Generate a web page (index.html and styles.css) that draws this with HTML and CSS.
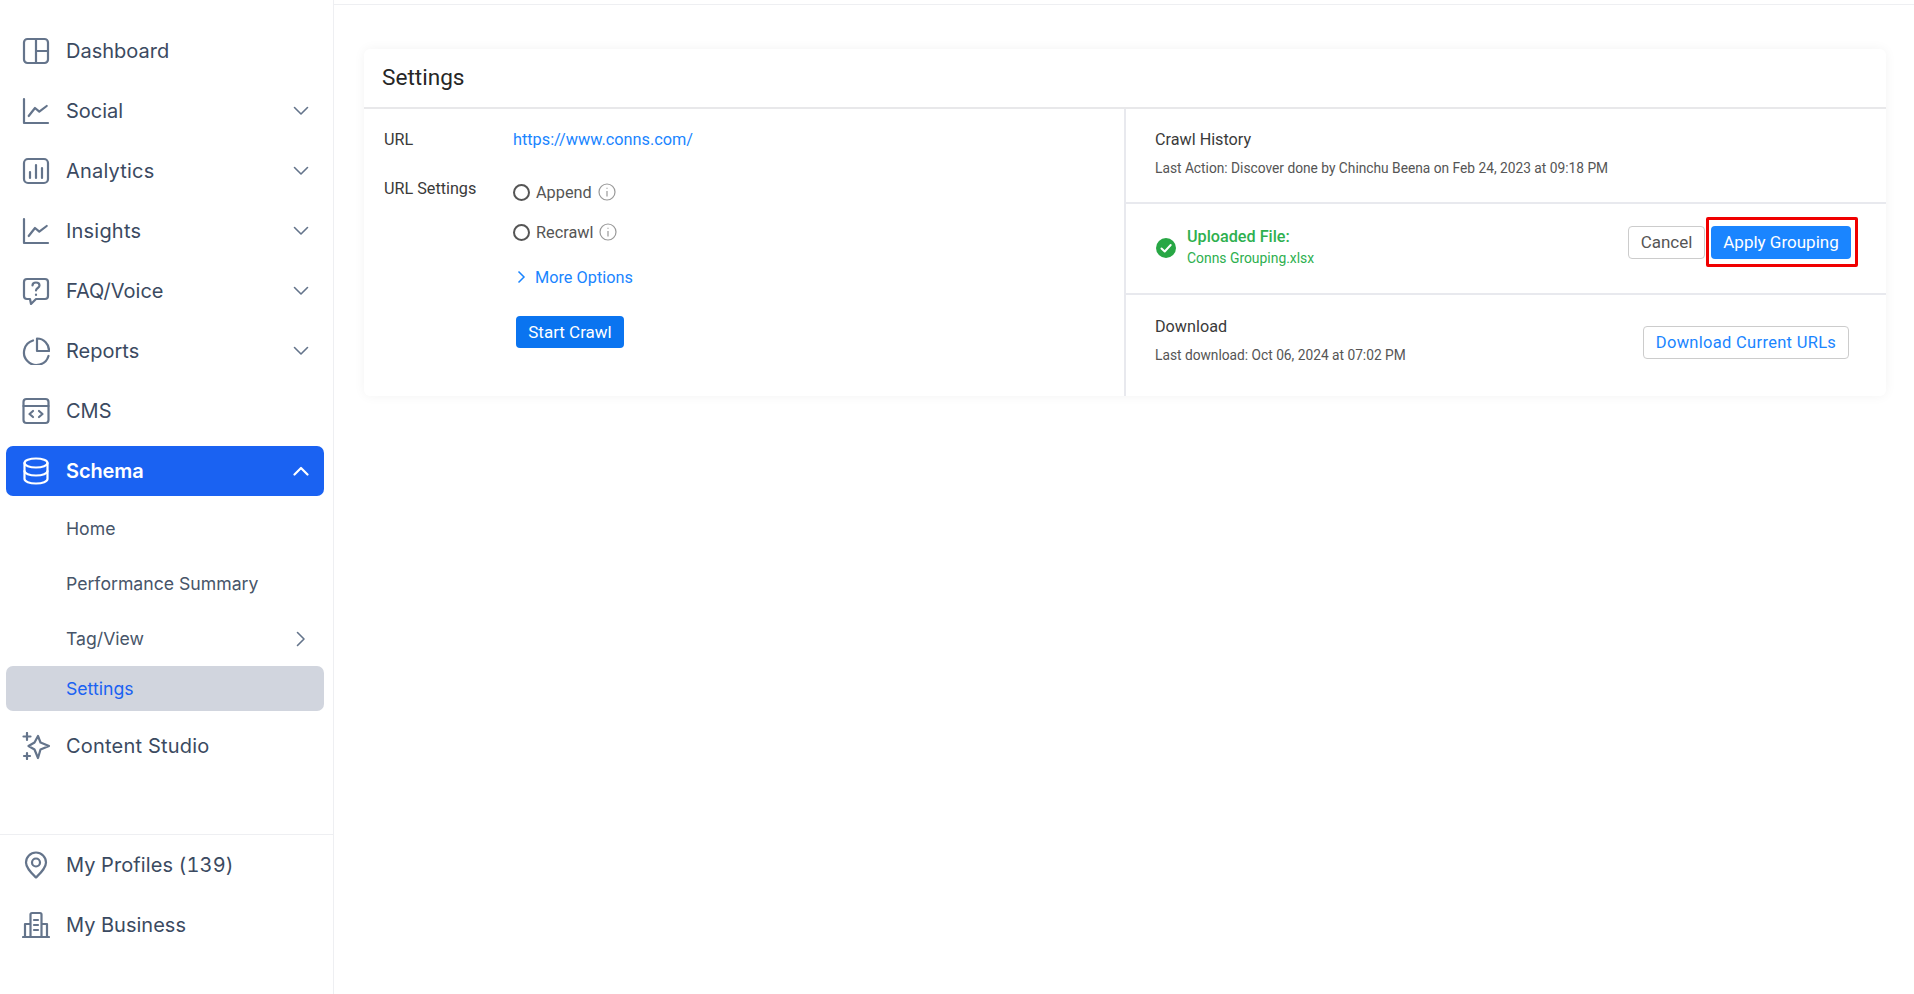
FILE: index.html
```html
<!DOCTYPE html>
<html lang="en">
<head>
    <meta charset="UTF-8">
    <meta name="viewport" content="width=device-width, initial-scale=1.0">
    <title>Schema Settings</title>
    <link rel="stylesheet" href="styles.css">
</head>
<body>
    <div class="page">
        <aside class="sidebar">
            <nav class="nav-main">
                <a class="nav-item" href="#">
                    <svg class="nav-icon" viewBox="0 0 28 28"><rect x="2" y="2" width="24" height="24" rx="3.500"/><path d="M14 2v24M14 14h12"/></svg>
                    <span>Dashboard</span>
                </a>
                <a class="nav-item" href="#">
                    <svg class="nav-icon" viewBox="0 0 28 28"><path d="M2 2v24h24"/><path d="M6.700 19l6.300-8 4.300 3.700 7.400-5.700"/></svg>
                    <span>Social</span>
                    <svg class="chevron" viewBox="0 0 16 16"><path d="M1.500 4.500L8 11l6.500-6.500"/></svg>
                </a>
                <a class="nav-item" href="#">
                    <svg class="nav-icon" viewBox="0 0 28 28"><rect x="2" y="2" width="24" height="24" rx="4"/><path d="M8 15v6M14 8v13M20 11v10"/></svg>
                    <span class="wide">Analytics</span>
                    <svg class="chevron" viewBox="0 0 16 16"><path d="M1.500 4.500L8 11l6.500-6.500"/></svg>
                </a>
                <a class="nav-item" href="#">
                    <svg class="nav-icon" viewBox="0 0 28 28"><path d="M2 2v24h24"/><path d="M6.700 19l6.300-8 4.300 3.700 7.400-5.700"/></svg>
                    <span class="wide">Insights</span>
                    <svg class="chevron" viewBox="0 0 16 16"><path d="M1.500 4.500L8 11l6.500-6.500"/></svg>
                </a>
                <a class="nav-item" href="#">
                    <svg class="nav-icon" viewBox="0 0 28 28"><path d="M5 2h18a3 3 0 0 1 3 3v14a3 3 0 0 1-3 3h-9l-5 5-1-5H5a3 3 0 0 1-3-3V5a3 3 0 0 1 3-3z"/><path d="M10.500 8.500c0-4 7-4 7 0 0 2.500-3.500 2.500-3.500 5"/><path d="M14 17.500v.4"/></svg>
                    <span>FAQ/Voice</span>
                    <svg class="chevron" viewBox="0 0 16 16"><path d="M1.500 4.500L8 11l6.500-6.500"/></svg>
                </a>
                <a class="nav-item" href="#">
                    <svg class="nav-icon" viewBox="0 0 28 28"><path d="M11 3.500A12.500 12.500 0 1 0 26.500 19"/><path d="M15 1.500a12 12 0 0 1 12 12.500H15z"/></svg>
                    <span>Reports</span>
                    <svg class="chevron" viewBox="0 0 16 16"><path d="M1.500 4.500L8 11l6.500-6.500"/></svg>
                </a>
                <a class="nav-item" href="#">
                    <svg class="nav-icon" viewBox="0 0 28 28"><rect x="1.500" y="2" width="25" height="24" rx="3"/><path d="M1.500 9h25M11 14l-3.500 3 3.500 3M17 14l3.500 3-3.500 3"/></svg>
                    <span>CMS</span>
                </a>
                <a class="nav-item active" href="#">
                    <svg class="nav-icon" viewBox="0 0 28 28"><ellipse cx="14" cy="6" rx="11.500" ry="4.500"/><path d="M2.500 6v16c0 2.500 5 4.500 11.500 4.500S25.500 24.500 25.500 22V6"/><path d="M2.500 14c0 2.500 5 4.500 11.500 4.500s11.500-2 11.500-4.500"/></svg>
                    <span>Schema</span>
                    <svg class="chevron" viewBox="0 0 16 16"><path d="M1.500 11.500L8 5l6.500 6.500"/></svg>
                </a>
                <div class="sub-nav">
                    <a class="sub-item" href="#">Home</a>
                    <a class="sub-item" href="#">Performance Summary</a>
                    <a class="sub-item" href="#">
                        <span>Tag/View</span>
                        <svg class="chevron" viewBox="0 0 16 16"><path d="M4.500 1.500L11 8l-6.500 6.500"/></svg>
                    </a>
                    <a class="sub-item current" href="#">Settings</a>
                </div>
                <a class="nav-item" href="#">
                    <svg class="nav-icon" viewBox="0 0 28 28"><path d="M16 4l2.500 6.500L27 14l-8.500 3.500L16 26l-3.500-8.500L6.500 14l6-3.500z"/><path d="M5 1v7M1.500 4.500h7M5 21v6M2 24h6"/></svg>
                    <span class="wide">Content Studio</span>
                </a>
            </nav>
            <nav class="nav-footer">
                <a class="nav-item" href="#">
                    <svg class="nav-icon" viewBox="0 0 28 28"><path d="M14 26.500C9 21.500 4 17 4 11.500a10 10 0 0 1 20 0C24 17 19 21.500 14 26.500z"/><circle cx="14" cy="11.500" r="4"/></svg>
                    <span class="count-label">My Profiles (139)</span>
                </a>
                <a class="nav-item" href="#">
                    <svg class="nav-icon" viewBox="0 0 28 28"><path d="M1 26h26M3 26V13h5.500M25 26V13h-5.500M8.500 26V3.500a1.500 1.500 0 0 1 1.500-1.500h8a1.500 1.500 0 0 1 1.500 1.500V26"/><path d="M12 9h4M12 14h4M12 19h4"/></svg>
                    <span>My Business</span>
                </a>
            </nav>
        </aside>

        <div class="main">
            <div class="top-line"></div>
            <section class="card">
                <h1 class="card-title">Settings</h1>
                <div class="card-body">
                    <div class="left-col">
                        <div class="field url-field">
                            <div class="field-label">URL</div>
                            <a class="link" href="#">https://www.conns.com/</a>
                        </div>
                        <div class="field settings-field">
                            <div class="field-label">URL Settings</div>
                            <div class="field-options">
                                <label class="radio-row"><span class="radio"></span>Append
                                    <svg class="info" viewBox="0 0 18 18"><circle cx="9" cy="9" r="8"/><path d="M9 8v5.500M9 4.800v1"/></svg>
                                </label>
                                <label class="radio-row"><span class="radio"></span>Recrawl
                                    <svg class="info" viewBox="0 0 18 18"><circle cx="9" cy="9" r="8"/><path d="M9 8v5.500M9 4.800v1"/></svg>
                                </label>
                                <a class="more-options" href="#">
                                    <svg class="more-arrow" viewBox="0 0 10 14"><path d="M2.500 1.500L8 7l-5.500 5.500"/></svg>
                                    More Options
                                </a>
                                <button class="btn btn-primary start-btn">Start Crawl</button>
                            </div>
                        </div>
                    </div>
                    <div class="right-col">
                        <div class="info-row history-row">
                            <div>
                                <div class="row-title">Crawl History</div>
                                <div class="row-text">Last Action: Discover done by Chinchu Beena on Feb 24, 2023 at 09:18 PM</div>
                            </div>
                        </div>
                        <div class="info-row upload-row">
                            <div class="upload-info">
                                <svg class="check" viewBox="0 0 20 20"><circle class="check-bg" cx="10" cy="10" r="10"/><path d="M5.500 10.500l3.200 3 6-6.500"/></svg>
                                <div>
                                    <div class="upload-title">Uploaded File:</div>
                                    <div class="upload-file">Conns Grouping.xlsx</div>
                                </div>
                            </div>
                            <div class="upload-actions">
                                <button class="btn btn-default">Cancel</button>
                                <div class="apply-wrap">
                                    <button class="btn btn-primary apply-btn">Apply Grouping</button>
                                    <div class="highlight"></div>
                                </div>
                            </div>
                        </div>
                        <div class="info-row download-row">
                            <div>
                                <div class="row-title">Download</div>
                                <div class="row-text">Last download: Oct 06, 2024 at 07:02 PM</div>
                            </div>
                            <button class="btn btn-outline">Download Current URLs</button>
                        </div>
                    </div>
                </div>
            </section>
        </div>
    </div>
</body>
</html>
```

FILE: styles.css
```css
* {
    margin: 0;
    padding: 0;
    box-sizing: border-box;
}

body {
    font-family: "Roboto", "Liberation Sans", sans-serif;
    background-color: #fff;
    color: #333;
    overflow: hidden;
}

a {
    text-decoration: none;
}

.page {
    display: flex;
    height: 994px;
}

/* sidebar */
.sidebar {
    width: 334px;
    flex-shrink: 0;
    display: flex;
    flex-direction: column;
    justify-content: space-between;
    border-right: 1px solid #eeeff2;
    font-family: "Inter", "Liberation Sans", sans-serif;
}

.nav-main {
    padding-top: 26px;
    display: flex;
    flex-direction: column;
    gap: 10px;
}

.nav-footer {
    display: flex;
    flex-direction: column;
    gap: 10px;
    border-top: 1px solid #eeeff2;
    padding: 5px 0 44px;
}

.nav-item {
    display: flex;
    align-items: center;
    gap: 16px;
    height: 50px;
    margin: 0 9px 0 6px;
    padding: 0 15px 0 16px;
    border-radius: 7px;
    font-size: 20px;
    color: #3b4a61;
}

.nav-item span {
    flex: 1;
}

.nav-item .wide {
    letter-spacing: 0.200px;
}

.nav-item .count-label {
    letter-spacing: 0.100px;
    font-feature-settings: "tnum";
}

.nav-icon {
    width: 28px;
    height: 28px;
    flex-shrink: 0;
    fill: none;
    stroke: #64748b;
    stroke-width: 2.200;
    stroke-linecap: round;
    stroke-linejoin: round;
}

.chevron {
    width: 16px;
    height: 16px;
    flex-shrink: 0;
    fill: none;
    stroke: #64748b;
    stroke-width: 1.600;
    stroke-linecap: round;
    stroke-linejoin: round;
}

.nav-item.active {
    background-color: #1a62f2;
    color: #fff;
    font-weight: 600;
}

.nav-item.active span {
    letter-spacing: -0.100px;
}

.nav-item.active .nav-icon,
.nav-item.active .chevron {
    stroke: #fff;
}

.nav-item.active .chevron {
    stroke-width: 2.200;
}

.sub-nav {
    display: flex;
    flex-direction: column;
    gap: 10px;
}

.sub-item {
    display: flex;
    align-items: center;
    justify-content: space-between;
    height: 45px;
    margin: 0 9px 0 6px;
    padding: 0 15px 0 60px;
    border-radius: 7px;
    font-size: 17.650px;
    color: #475569;
}

.sub-item.current {
    margin-top: -5px;
    background-color: #d1d5de;
    color: #1a62f2;
}

/* main */
.main {
    flex: 1;
    min-width: 0;
}

.top-line {
    height: 5px;
    border-bottom: 1px solid #eeeff2;
}

.card {
    margin: 44px 28px 0 30px;
    height: 347px;
    border-radius: 6px;
    background-color: #fff;
    box-shadow: 0 0 12px rgba(0, 0, 0, 0.05);
    display: flex;
    flex-direction: column;
}

.card-title {
    height: 60px;
    padding: 14px 19px 0;
    font-size: 22.600px;
    line-height: 30px;
    font-weight: 400;
    color: #262626;
    border-bottom: 2px solid #e8e8ea;
    text-indent: -1px;
}

.card-body {
    flex: 1;
    display: flex;
}

.left-col {
    width: 762px;
    padding: 19px 20px 0;
    border-right: 2px solid #e8e9ee;
}

.field {
    display: flex;
}

.url-field {
    margin-bottom: 26px;
}

.field-label {
    width: 129px;
    font-size: 16.200px;
    line-height: 24px;
    color: #3a3a3a;
}

.settings-field .field-label {
    margin-top: -1px;
}

.link {
    font-size: 16.300px;
    line-height: 24px;
    color: #1a85ff;
}

.field-options {
    display: flex;
    flex-direction: column;
    align-items: flex-start;
}

.radio-row {
    display: flex;
    align-items: center;
    height: 28px;
    margin-bottom: 12px;
    color: #555;
    font-size: 16.300px;
}

.radio {
    width: 17px;
    height: 17px;
    margin-right: 6px;
    border: 2px solid #555;
    border-radius: 50%;
}

.info {
    width: 18px;
    height: 18px;
    margin-left: 6px;
    fill: none;
    stroke: #999;
    stroke-width: 1.200;
}

.more-options {
    display: flex;
    align-items: center;
    gap: 9px;
    height: 28px;
    margin: 5px 0 0 3px;
    color: #1a85ff;
    font-size: 16.300px;
}

.more-arrow {
    width: 10px;
    height: 14px;
    fill: none;
    stroke: #1a85ff;
    stroke-width: 1.500;
}

.btn {
    font-family: inherit;
    border-radius: 4px;
    cursor: pointer;
}

.btn-primary {
    background-color: #0a74f0;
    border: none;
    color: #fff;
}

.start-btn {
    width: 108px;
    height: 32px;
    margin: 25px 0 0 3px;
    font-size: 17px;
}

.right-col {
    flex: 1;
    display: flex;
    flex-direction: column;
}

.info-row {
    display: flex;
    justify-content: space-between;
    padding: 0 37px 0 29px;
}

.history-row {
    height: 95px;
    padding-top: 19px;
    border-bottom: 2px solid #e8e9ee;
}

.upload-row {
    height: 91px;
    align-items: center;
    padding-right: 35px;
    border-bottom: 2px solid #e8e9ee;
}

.download-row {
    flex: 1;
    align-items: center;
    padding-bottom: 10px;
}

.row-title {
    font-size: 16.200px;
    line-height: 24px;
    color: #3a3a3a;
}

.row-text {
    margin-top: 5px;
    font-size: 13.750px;
    line-height: 22px;
    color: #555;
}

.upload-info {
    display: flex;
    align-items: center;
    gap: 11px;
    margin: 0 0 3px 1px;
}

.check {
    width: 20px;
    height: 20px;
    margin-top: 2px;
    fill: none;
    stroke: #fff;
    stroke-width: 2;
    stroke-linecap: round;
    stroke-linejoin: round;
}

.check-bg {
    fill: #28a745;
    stroke: none;
}

.upload-title {
    font-size: 16.200px;
    line-height: 22px;
    font-weight: 500;
    color: #2eb04f;
}

.upload-file {
    font-size: 13.900px;
    line-height: 20px;
    color: #2eb04f;
}

.upload-actions {
    display: flex;
    gap: 6px;
    margin-bottom: 13px;
}

.btn-default {
    width: 77px;
    height: 33px;
    background-color: #fff;
    border: 1px solid #ccc;
    color: #555;
    font-size: 17px;
}

.apply-wrap {
    position: relative;
}

.apply-btn {
    display: block;
    width: 140px;
    height: 33px;
    font-size: 17px;
    background-color: #1a85ff;
}

/* red annotation box drawn over the screenshot */
.highlight {
    position: absolute;
    top: -9px;
    left: -5px;
    width: 152px;
    height: 50px;
    border: 3.500px solid #f00000;
    border-radius: 2px;
}

.btn-outline {
    width: 206px;
    height: 33px;
    margin-top: 3px;
    background-color: #fff;
    border: 1px solid #ccc;
    color: #1a85ff;
    font-size: 16.500px;
    letter-spacing: 0.300px;
}
```
